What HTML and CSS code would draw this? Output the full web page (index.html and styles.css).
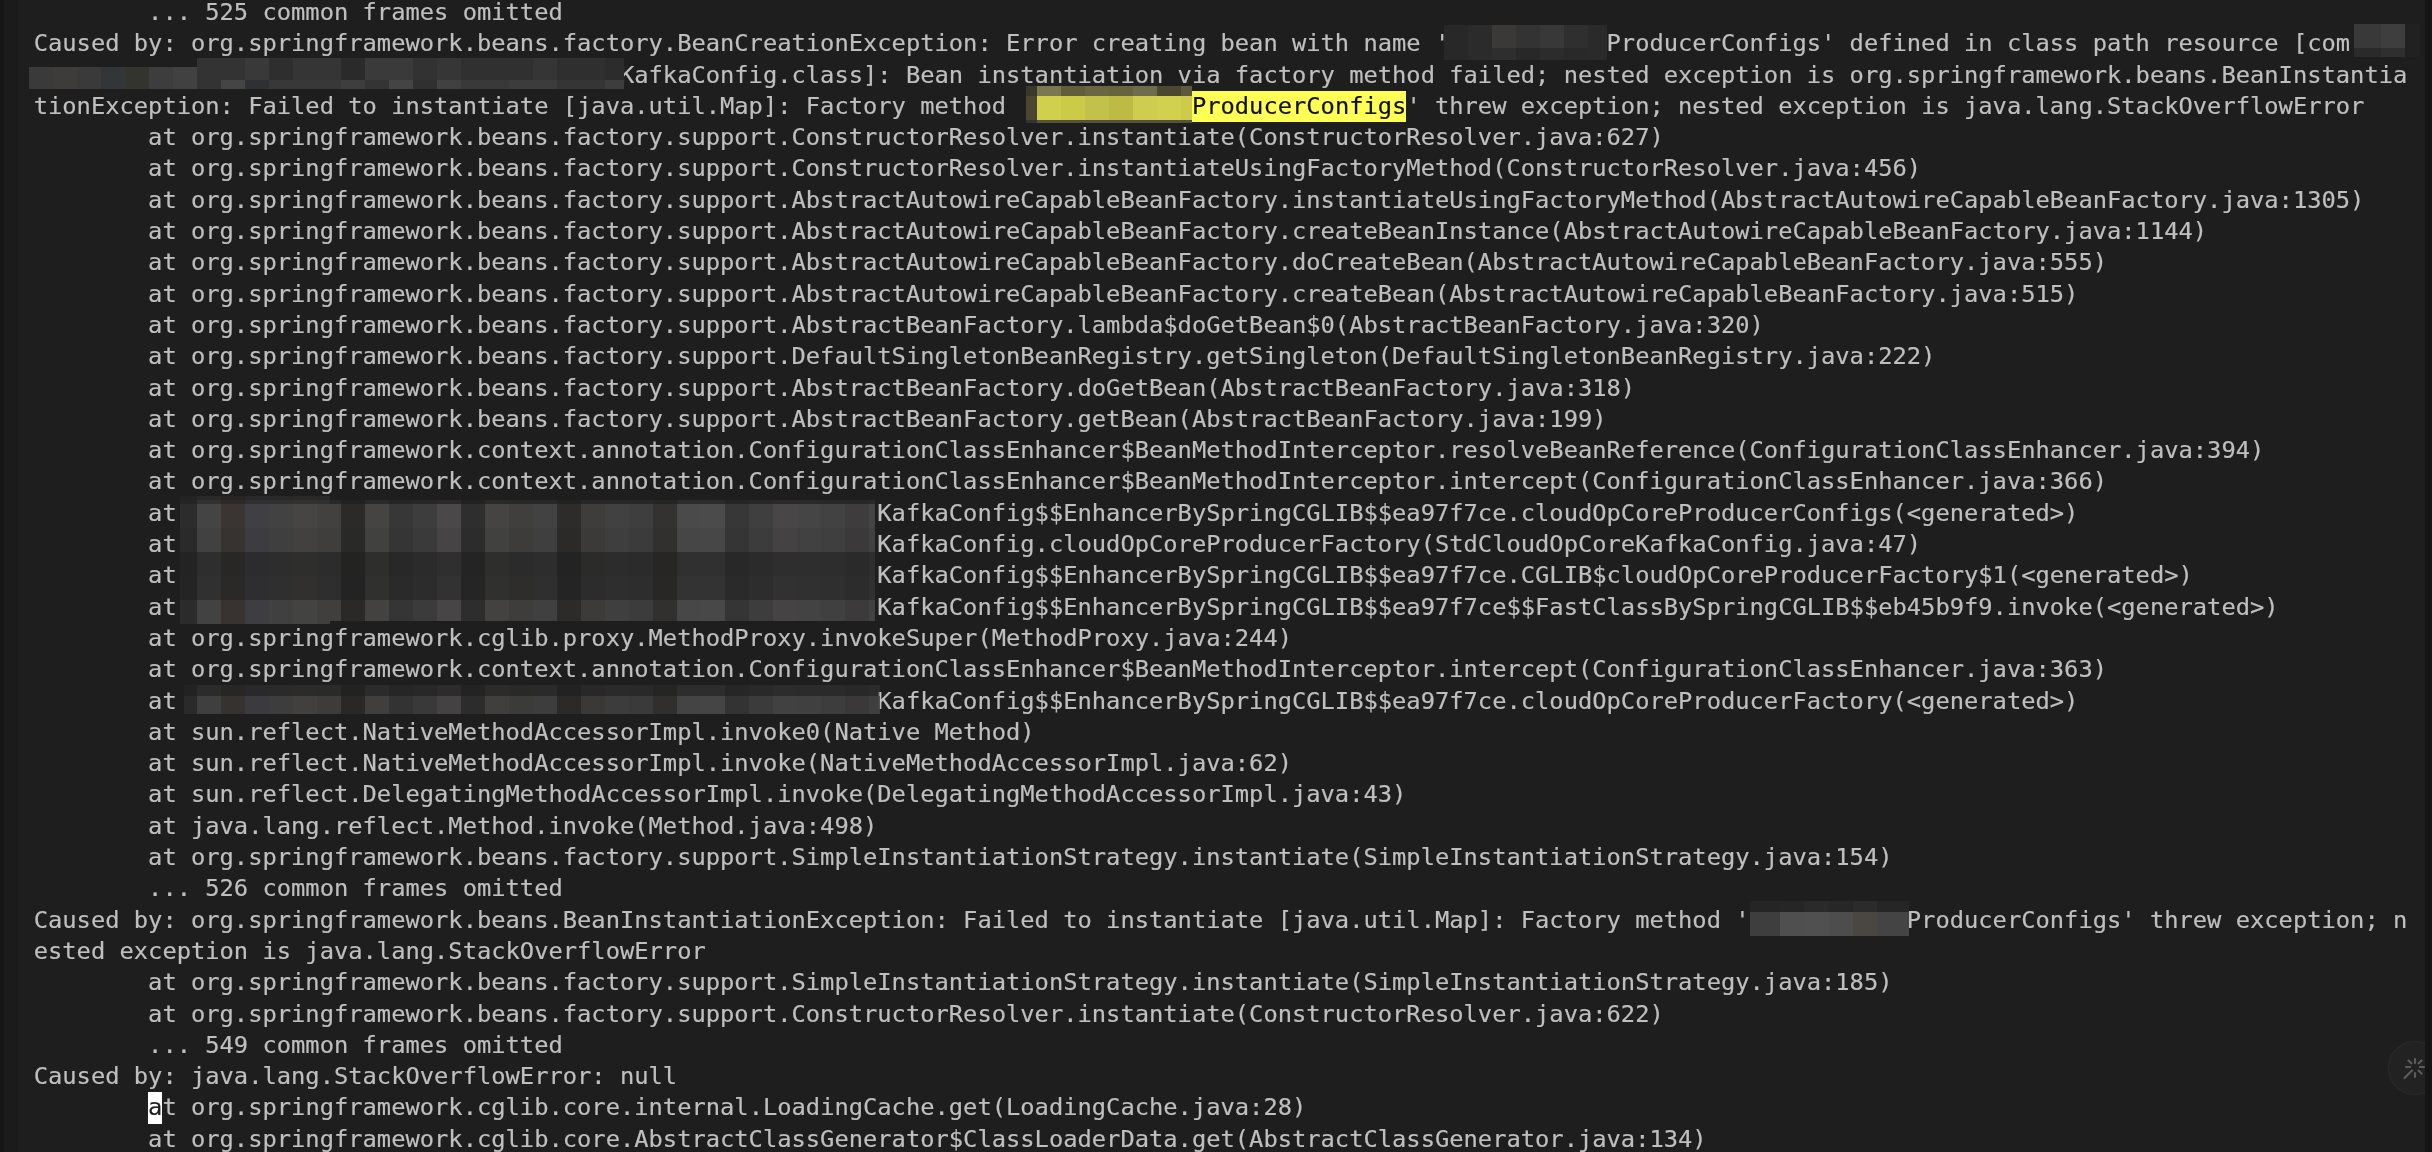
FILE: index.html
```html
<!DOCTYPE html>
<html lang="en">
<head>
<meta charset="utf-8">
<title>Console</title>
<link rel="stylesheet" href="styles.css">
</head>
<body>
<main class="screen">
<div class="edge"></div>
<div class="gutter"></div>
<section class="console">
<pre class="log">        ... 525 common frames omitted
Caused by: org.springframework.beans.factory.BeanCreationException: Error creating bean with name '           ProducerConfigs' defined in class path resource [com,
                                         KafkaConfig.class]: Bean instantiation via factory method failed; nested exception is org.springframework.beans.BeanInstantia
tionException: Failed to instantiate [java.util.Map]: Factory method '           <span class="hit">ProducerConfigs</span>' threw exception; nested exception is java.lang.StackOverflowError
        at org.springframework.beans.factory.support.ConstructorResolver.instantiate(ConstructorResolver.java:627)
        at org.springframework.beans.factory.support.ConstructorResolver.instantiateUsingFactoryMethod(ConstructorResolver.java:456)
        at org.springframework.beans.factory.support.AbstractAutowireCapableBeanFactory.instantiateUsingFactoryMethod(AbstractAutowireCapableBeanFactory.java:1305)
        at org.springframework.beans.factory.support.AbstractAutowireCapableBeanFactory.createBeanInstance(AbstractAutowireCapableBeanFactory.java:1144)
        at org.springframework.beans.factory.support.AbstractAutowireCapableBeanFactory.doCreateBean(AbstractAutowireCapableBeanFactory.java:555)
        at org.springframework.beans.factory.support.AbstractAutowireCapableBeanFactory.createBean(AbstractAutowireCapableBeanFactory.java:515)
        at org.springframework.beans.factory.support.AbstractBeanFactory.lambda$doGetBean$0(AbstractBeanFactory.java:320)
        at org.springframework.beans.factory.support.DefaultSingletonBeanRegistry.getSingleton(DefaultSingletonBeanRegistry.java:222)
        at org.springframework.beans.factory.support.AbstractBeanFactory.doGetBean(AbstractBeanFactory.java:318)
        at org.springframework.beans.factory.support.AbstractBeanFactory.getBean(AbstractBeanFactory.java:199)
        at org.springframework.context.annotation.ConfigurationClassEnhancer$BeanMethodInterceptor.resolveBeanReference(ConfigurationClassEnhancer.java:394)
        at org.springframework.context.annotation.ConfigurationClassEnhancer$BeanMethodInterceptor.intercept(ConfigurationClassEnhancer.java:366)
        at                                                 KafkaConfig$$EnhancerBySpringCGLIB$$ea97f7ce.cloudOpCoreProducerConfigs(&lt;generated&gt;)
        at                                                 KafkaConfig.cloudOpCoreProducerFactory(StdCloudOpCoreKafkaConfig.java:47)
        at                                                 KafkaConfig$$EnhancerBySpringCGLIB$$ea97f7ce.CGLIB$cloudOpCoreProducerFactory$1(&lt;generated&gt;)
        at                                                 KafkaConfig$$EnhancerBySpringCGLIB$$ea97f7ce$$FastClassBySpringCGLIB$$eb45b9f9.invoke(&lt;generated&gt;)
        at org.springframework.cglib.proxy.MethodProxy.invokeSuper(MethodProxy.java:244)
        at org.springframework.context.annotation.ConfigurationClassEnhancer$BeanMethodInterceptor.intercept(ConfigurationClassEnhancer.java:363)
        at                                                 KafkaConfig$$EnhancerBySpringCGLIB$$ea97f7ce.cloudOpCoreProducerFactory(&lt;generated&gt;)
        at sun.reflect.NativeMethodAccessorImpl.invoke0(Native Method)
        at sun.reflect.NativeMethodAccessorImpl.invoke(NativeMethodAccessorImpl.java:62)
        at sun.reflect.DelegatingMethodAccessorImpl.invoke(DelegatingMethodAccessorImpl.java:43)
        at java.lang.reflect.Method.invoke(Method.java:498)
        at org.springframework.beans.factory.support.SimpleInstantiationStrategy.instantiate(SimpleInstantiationStrategy.java:154)
        ... 526 common frames omitted
Caused by: org.springframework.beans.BeanInstantiationException: Failed to instantiate [java.util.Map]: Factory method '           ProducerConfigs' threw exception; n
ested exception is java.lang.StackOverflowError
        at org.springframework.beans.factory.support.SimpleInstantiationStrategy.instantiate(SimpleInstantiationStrategy.java:185)
        at org.springframework.beans.factory.support.ConstructorResolver.instantiate(ConstructorResolver.java:622)
        ... 549 common frames omitted
Caused by: java.lang.StackOverflowError: null
        <span class="caret">a</span>t org.springframework.cglib.core.internal.LoadingCache.get(LoadingCache.java:28)
        at org.springframework.cglib.core.AbstractClassGenerator$ClassLoaderData.get(AbstractClassGenerator.java:134)</pre>
</section>
<div class="scrollbar"></div>
</main>

<svg class="mosaics" viewBox="0 0 2432 1152" width="2432" height="1152" aria-hidden="true">
  <defs>
    <g id="cols">
      <rect x="180" width="17" height="1" fill="#2c2c2c"/>
      <rect x="197" width="24" height="1" fill="#444444"/>
      <rect x="221" width="24" height="1" fill="#3a3533"/>
      <rect x="245" width="24" height="1" fill="#404044"/>
      <rect x="269" width="24" height="1" fill="#424242"/>
      <rect x="293" width="24" height="1" fill="#464543"/>
      <rect x="317" width="24" height="1" fill="#424140"/>
      <rect x="341" width="24" height="1" fill="#2b2a29"/>
      <rect x="365" width="24" height="1" fill="#454443"/>
      <rect x="389" width="24" height="1" fill="#373737"/>
      <rect x="413" width="24" height="1" fill="#3d3d3d"/>
      <rect x="437" width="24" height="1" fill="#4a4849"/>
      <rect x="461" width="24" height="1" fill="#2d2e2d"/>
      <rect x="485" width="24" height="1" fill="#454442"/>
      <rect x="509" width="24" height="1" fill="#403f3d"/>
      <rect x="533" width="24" height="1" fill="#424242"/>
      <rect x="557" width="24" height="1" fill="#2d2c2b"/>
      <rect x="581" width="24" height="1" fill="#3e3d3c"/>
      <rect x="605" width="24" height="1" fill="#414141"/>
      <rect x="629" width="24" height="1" fill="#3e3e3e"/>
      <rect x="653" width="24" height="1" fill="#343230"/>
      <rect x="677" width="24" height="1" fill="#4a4a4a"/>
      <rect x="701" width="24" height="1" fill="#4b4b4b"/>
      <rect x="725" width="24" height="1" fill="#373737"/>
      <rect x="749" width="24" height="1" fill="#3f3f3f"/>
      <rect x="773" width="24" height="1" fill="#484646"/>
      <rect x="797" width="24" height="1" fill="#454545"/>
      <rect x="821" width="24" height="1" fill="#424242"/>
      <rect x="845" width="24" height="1" fill="#3e3c3c"/>
      <rect x="869" width="11" height="1" fill="#444444"/>
    </g>
    <clipPath id="clip-wide"><rect x="180" y="480" width="695" height="160"/></clipPath>
    <clipPath id="clip-left"><rect x="180" y="480" width="150" height="160"/></clipPath>
    <clipPath id="clip-low"><rect x="184" y="670" width="696" height="60"/></clipPath>
  </defs>

  <!-- lines 16 to 19 -->
  <g clip-path="url(#clip-left)">
    <use href="#cols" transform="translate(0,496) scale(1,8)" opacity=".3"/>
    <use href="#cols" transform="translate(0,621) scale(1,3)" opacity=".95"/>
  </g>
  <g clip-path="url(#clip-wide)">
    <use href="#cols" transform="translate(0,500) scale(1,4)" opacity=".3"/>
    <use href="#cols" transform="translate(0,504) scale(1,24)"/>
    <use href="#cols" transform="translate(0,528) scale(1,24)" opacity=".92"/>
    <use href="#cols" transform="translate(0,552) scale(1,24)" opacity=".42"/>
    <use href="#cols" transform="translate(0,576) scale(1,24)" opacity=".48"/>
    <use href="#cols" transform="translate(0,600) scale(1,21)" opacity=".95"/>
  </g>

  <!-- line 22 -->
  <g clip-path="url(#clip-low)">
    <use href="#cols" transform="translate(0,685) scale(1,11)" opacity=".35"/>
    <use href="#cols" transform="translate(0,696) scale(1,18)" opacity=".88"/>
  </g>

  <!-- line 1 -->
  <g>
    <rect x="1444" y="25" width="24" height="35" fill="#282828"/>
    <rect x="1468" y="25" width="24" height="35" fill="#2b2b2c"/>
    <rect x="1492" y="25" width="24" height="23" fill="#3a3938"/>
    <rect x="1492" y="48" width="24" height="12" fill="#2e2e2e"/>
    <rect x="1516" y="25" width="24" height="23" fill="#333333"/>
    <rect x="1516" y="48" width="24" height="12" fill="#282828"/>
    <rect x="1540" y="25" width="24" height="23" fill="#383838"/>
    <rect x="1540" y="48" width="24" height="12" fill="#2c2c2c"/>
    <rect x="1564" y="25" width="24" height="23" fill="#2f2f2f"/>
    <rect x="1564" y="48" width="24" height="12" fill="#292929"/>
    <rect x="1588" y="25" width="19" height="35" fill="#2a2a2a"/>
    <rect x="2354" y="24" width="27" height="24" fill="#393939"/>
    <rect x="2381" y="24" width="24" height="24" fill="#3e3e3e"/>
    <rect x="2354" y="48" width="27" height="9" fill="#2a2a2a"/>
    <rect x="2381" y="48" width="24" height="9" fill="#2f2f2f"/>
    <rect x="2405" y="24" width="15" height="33" fill="#212121"/>
  </g>

  <!-- line 2 -->
  <g>
    <rect x="29" y="67" width="24" height="22" fill="#3a3a3a"/>
    <rect x="53" y="67" width="24" height="22" fill="#3e3c3b"/>
    <rect x="77" y="67" width="24" height="22" fill="#3a3a3a"/>
    <rect x="101" y="67" width="24" height="22" fill="#333639"/>
    <rect x="125" y="67" width="24" height="22" fill="#34342f"/>
    <rect x="149" y="67" width="24" height="22" fill="#3d3d3d"/>
    <rect x="173" y="67" width="24" height="22" fill="#414141"/>
    <rect x="197" y="58" width="48" height="22" fill="#333333"/>
    <rect x="245" y="58" width="24" height="22" fill="#393939"/>
    <rect x="269" y="58" width="24" height="22" fill="#2e2e2e"/>
    <rect x="293" y="58" width="48" height="22" fill="#353535"/>
    <rect x="341" y="58" width="24" height="22" fill="#2a2a2a"/>
    <rect x="365" y="58" width="48" height="22" fill="#3a3a3a"/>
    <rect x="413" y="58" width="24" height="22" fill="#323232"/>
    <rect x="437" y="58" width="24" height="22" fill="#363636"/>
    <rect x="461" y="58" width="72" height="22" fill="#303030"/>
    <rect x="533" y="58" width="24" height="22" fill="#353535"/>
    <rect x="557" y="58" width="48" height="22" fill="#2f2f2f"/>
    <rect x="605" y="58" width="19" height="22" fill="#2c2c2c"/>
    <rect x="197" y="80" width="24" height="9" fill="#333333"/>
    <rect x="221" y="80" width="24" height="9" fill="#454545"/>
    <rect x="245" y="80" width="24" height="9" fill="#2e3033"/>
    <rect x="269" y="80" width="72" height="9" fill="#383838"/>
    <rect x="341" y="80" width="24" height="9" fill="#3e3e3e"/>
    <rect x="365" y="80" width="24" height="9" fill="#343434"/>
    <rect x="389" y="80" width="24" height="9" fill="#444444"/>
    <rect x="413" y="80" width="24" height="9" fill="#303030"/>
    <rect x="437" y="80" width="24" height="9" fill="#414141"/>
    <rect x="461" y="80" width="48" height="9" fill="#393939"/>
    <rect x="509" y="80" width="48" height="9" fill="#3c3c3c"/>
    <rect x="557" y="80" width="48" height="9" fill="#353535"/>
    <rect x="605" y="80" width="19" height="9" fill="#3d3d3d"/>
  </g>

  <!-- line 3, over the search hit -->
  <g>
    <rect x="1026" y="86" width="11" height="10" fill="#3a3829"/>
    <rect x="1037" y="86" width="24" height="10" fill="#7a7850"/>
    <rect x="1061" y="86" width="24" height="10" fill="#5f5f3c"/>
    <rect x="1085" y="86" width="24" height="10" fill="#6a6542"/>
    <rect x="1109" y="86" width="24" height="10" fill="#66633f"/>
    <rect x="1133" y="86" width="24" height="10" fill="#6d6c4c"/>
    <rect x="1157" y="86" width="24" height="10" fill="#4a4830"/>
    <rect x="1181" y="86" width="11" height="10" fill="#5d5a3c"/>
    <rect x="1026" y="96" width="11" height="24" fill="#4a4630"/>
    <rect x="1037" y="96" width="24" height="24" fill="#d1d04c"/>
    <rect x="1061" y="96" width="24" height="24" fill="#cccb48"/>
    <rect x="1085" y="96" width="24" height="24" fill="#c2c14a"/>
    <rect x="1109" y="96" width="24" height="24" fill="#bdbb44"/>
    <rect x="1133" y="96" width="24" height="24" fill="#cfcd4f"/>
    <rect x="1157" y="96" width="24" height="24" fill="#d2d04f"/>
    <rect x="1181" y="96" width="11" height="24" fill="#cdcb4b"/>
    <rect x="1026" y="120" width="11" height="3" fill="#333333"/>
    <rect x="1037" y="120" width="155" height="3" fill="#55533a"/>
  </g>

  <!-- line 29 -->
  <g>
    <rect x="1750" y="901" width="30" height="11" fill="#252525"/>
    <rect x="1780" y="901" width="24" height="11" fill="#262626"/>
    <rect x="1804" y="901" width="25" height="11" fill="#2a2a2a"/>
    <rect x="1829" y="901" width="24" height="11" fill="#272727"/>
    <rect x="1853" y="901" width="24" height="11" fill="#2b2b2b"/>
    <rect x="1877" y="901" width="32" height="11" fill="#262626"/>
    <rect x="1750" y="912" width="30" height="24" fill="#3e3e3e"/>
    <rect x="1780" y="912" width="24" height="24" fill="#4f4f4f"/>
    <rect x="1804" y="912" width="25" height="24" fill="#505050"/>
    <rect x="1829" y="912" width="24" height="24" fill="#4d4d4d"/>
    <rect x="1853" y="912" width="24" height="24" fill="#4a4742"/>
    <rect x="1877" y="912" width="32" height="24" fill="#444444"/>
  </g>
</svg>

<svg class="assist" viewBox="0 0 56 56" width="56" height="56" aria-hidden="true">
  <circle cx="28" cy="28" r="26.5" class="assist-disc"/>
  <path class="assist-rays" d="M28 19v4M28 33v4M19 27h4M33 27h4M21.5 20.5l2.8 2.8M34.5 20.5l-2.8 2.8M34.5 33.5l-2.8-2.8"/>
  <path class="assist-wand" d="M17.5 38l7.5-7.5"/>
</svg>
</body>
</html>
```

FILE: styles.css
```css
html, body {
  margin: 0;
  padding: 0;
  width: 2432px;
  height: 1152px;
  overflow: hidden;
  background: #1e1e1e;
}

body {
  position: relative;
}

.screen {
  display: flex;
  height: 1152px;
}

.edge {
  flex: 0 0 4px;
  background: #151515;
}

.gutter {
  flex: 0 0 14px;
  background: #1b1b1b;
}

.console {
  flex: 1 1 auto;
  min-width: 0;
  overflow: hidden;
  background: #1e1e1e;
}

.scrollbar {
  flex: 0 0 7px;
  background: #141414;
}

.log {
  margin: -3px 0 0;
  padding-left: 15.7px;
  font-family: "DejaVu Sans Mono", "Liberation Mono", monospace;
  font-size: 23.75px;
  line-height: 31.3px;
  color: #bfbfbf;
  white-space: pre;
  -webkit-text-stroke: 0.2px #bfbfbf;
  filter: blur(0.35px);
}

.hit {
  display: inline-block;
  background: #ffff55;
  color: #111111;
  -webkit-text-stroke-color: #111111;
}

.caret {
  display: inline-block;
  background: #ffffff;
  color: #1e1e1e;
  -webkit-text-stroke-color: #1e1e1e;
}

.mosaics {
  position: absolute;
  left: 0;
  top: 0;
  pointer-events: none;
}

.assist {
  position: absolute;
  left: 2387px;
  top: 1040px;
  clip-path: inset(0 18px 0 0);
}

.assist-disc {
  fill: #222222;
  stroke: #282828;
  stroke-width: 1.5;
}

.assist-rays,
.assist-wand {
  fill: none;
  stroke: #5c5c5c;
  stroke-width: 2.2;
  stroke-linecap: round;
}
```
